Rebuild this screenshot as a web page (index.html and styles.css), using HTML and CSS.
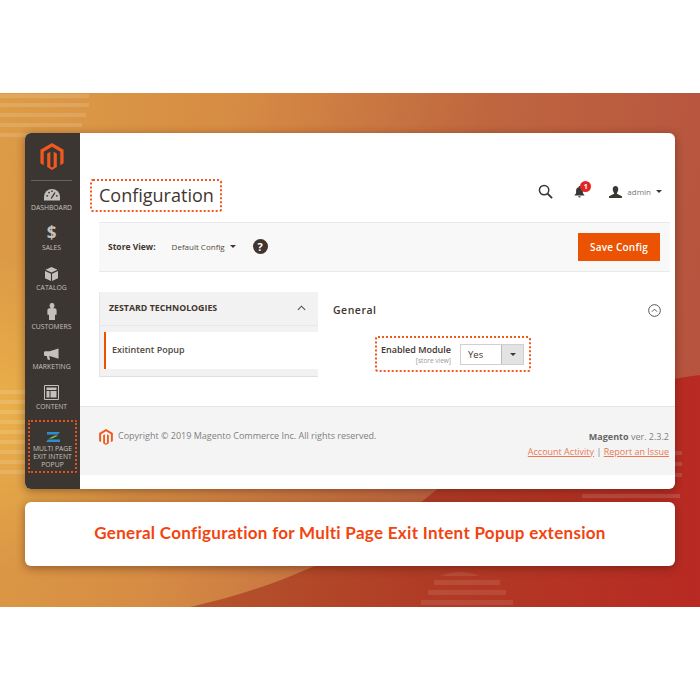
FILE: index.html
```html
<!DOCTYPE html>
<html lang="en">
<head>
    <meta charset="utf-8">
    <title>General Configuration</title>
    <link rel="stylesheet" href="styles.css">
</head>
<body>

    <div class="banner">
        <svg class="banner-art" viewBox="0 0 700 514" width="700" height="514">
            <defs>
                <linearGradient id="redfill" x1="0" y1="0" x2="1" y2="0">
                    <stop offset="0" stop-color="#b4552c"></stop>
                    <stop offset="0.45" stop-color="#b03c25"></stop>
                    <stop offset="1" stop-color="#b82a23"></stop>
                </linearGradient>
            </defs>
            <path d="M190 514C320 485 400 430 450 385C530 330 620 292 700 282V514Z" fill="url(#redfill)"></path>
            <g fill="#fff" opacity="0.13">
                <rect x="0" y="1" width="89" height="4"></rect>
                <rect x="0" y="10" width="89" height="4"></rect>
                <rect x="0" y="20" width="86" height="4"></rect>
                <rect x="0" y="30" width="82" height="4"></rect>
                <rect x="0" y="40" width="78" height="4"></rect>
                <rect x="0" y="297" width="25" height="4"></rect>
                <rect x="0" y="307" width="25" height="4"></rect>
                <rect x="0" y="317" width="25" height="4"></rect>
                <rect x="0" y="327" width="25" height="4"></rect>
                <rect x="0" y="337" width="25" height="4"></rect>
                <rect x="0" y="347" width="25" height="4"></rect>
                <rect x="0" y="357" width="25" height="4"></rect>
                <rect x="0" y="367" width="25" height="4"></rect>
                <rect x="0" y="377" width="25" height="4"></rect>
                <rect x="675" y="358" width="7" height="4"></rect>
                <rect x="675" y="369" width="7" height="4"></rect>
                <rect x="675" y="380" width="7" height="4"></rect>
                <rect x="582" y="401" width="98" height="4"></rect>
            </g>
            <g fill="#fff" opacity="0.09">
                <path d="M440 483q20-8 40 0z"></path>
                <rect x="434" y="487" width="66" height="5"></rect>
                <rect x="428" y="497" width="78" height="5"></rect>
                <rect x="421" y="507" width="92" height="5"></rect>
            </g>
        </svg>

        <div class="card">
            <nav class="sidebar">
                <div class="side-logo">
                    <svg viewBox="0 0 24 28" width="24" height="27"><path fill="#f1591f" d="M12 0L24 7v14l-3.400 2V9L12 4 3.400 9v14L0 21V7zM13.700 9v15.300L12 25.300l-1.700-1V9L7 11v14l5 3 5-3V11z"></path></svg>
                </div>
                <a class="side-item">
                    <svg viewBox="0 0 16 12" width="16" height="12"><path fill="#c4c1bc" d="M8 0a8 8 0 0 1 8 8v3.500H0V8a8 8 0 0 1 8-8z"></path><path stroke="#3b3632" stroke-width="1.400" d="M7.200 9.500L11 3.500M2.500 6.500l1.500.7M4.500 3l1 1.200M8 1.500V3M13.500 6.500l-1.500.7"></path></svg>
                    <span>DASHBOARD</span>
                </a>
                <a class="side-item">
                    <span class="side-dollar">$</span>
                    <span>SALES</span>
                </a>
                <a class="side-item">
                    <svg viewBox="0 0 14 15" width="13" height="14"><path fill="#c4c1bc" d="M7 0l6.500 3L7 6 .5 3zM0 4.200l6.400 3V15L0 12zM14 4.200l-6.400 3V15l6.400-3z"></path></svg>
                    <span>CATALOG</span>
                </a>
                <a class="side-item">
                    <svg viewBox="0 0 10 17" width="10" height="17"><path fill="#c4c1bc" d="M5 0a2.400 2.400 0 0 1 2.400 2.600C7.400 4 6.800 5 6 5.300h1.600C9 5.300 9.600 6.300 9.600 7.500v4.300H8V17H2v-5.200H.4V7.500C.4 6.300 1 5.300 2.400 5.300H4C3.200 5 2.600 4 2.600 2.600A2.400 2.400 0 0 1 5 0z"></path></svg>
                    <span>CUSTOMERS</span>
                </a>
                <a class="side-item">
                    <svg viewBox="0 0 16 12" width="15" height="12"><path fill="#c4c1bc" d="M15.500 0v11L6 8.200H5.500L6.500 12H4L3 8.200H1.500A1.500 1.500 0 0 1 0 6.700V4.500A1.500 1.500 0 0 1 1.500 3H6z"></path></svg>
                    <span>MARKETING</span>
                </a>
                <a class="side-item">
                    <svg viewBox="0 0 15 15" width="15" height="15"><path fill="none" stroke="#c4c1bc" stroke-width="1" d="M.5.5h14v14H.5z"></path><path fill="#c4c1bc" d="M2.500 2.500h10v2.500h-10zM2.500 6h3v6.500h-3zM6.500 6h6v6.500h-6z"></path></svg>
                    <span>CONTENT</span>
                </a>
                <a class="side-item side-ext">
                    <svg viewBox="0 0 14 10" width="14" height="10"><path fill="#2a8fd6" d="M1 0h13l-2 2.500H1z"></path><path fill="#8cc63f" d="M9 3.400h3.400L6 6.600H2.600z"></path><path fill="#2a8fd6" d="M2 7.500h12V10H0z"></path></svg>
                    <span>MULTI PAGE EXIT INTENT POPUP</span>
                </a>
            </nav>

            <div class="main">
                <div class="page-head">
                    <h1 class="page-title">Configuration</h1>
                    <div class="head-actions">
                        <svg viewBox="0 0 16 16" width="15" height="15"><circle cx="6.500" cy="6.500" r="5" fill="none" stroke="#3a3632" stroke-width="1.600"></circle><path stroke="#3a3632" stroke-width="2" d="M10.200 10.200L15 15"></path></svg>
                        <div class="bell">
                            <svg viewBox="0 0 12 14" width="11" height="12"><path fill="#3a3632" d="M6 0c.6 0 1 .4 1 1v.5c2 .5 3 2 3 4v3l2 2.500H0l2-2.500v-3c0-2 1-3.500 3-4V1c0-.6.4-1 1-1zM4.500 12h3a1.500 1.500 0 0 1-3 0z"></path></svg>
                            <span class="badge">1</span>
                        </div>
                        <div class="user">
                            <svg viewBox="0 0 14 13" width="13" height="12"><path fill="#3a3632" d="M7 0c2 0 3 1.500 3 3.500S9 7 8.500 7.500V8.500L14 11v2H0v-2l5.500-2.500V7.500C5 7 4 5.500 4 3.500S5 0 7 0z"></path></svg>
                            <span>admin</span>
                            <i class="caret"></i>
                        </div>
                    </div>
                </div>

                <div class="toolbar">
                    <b class="store-label">Store View:</b>
                    <span class="store-value">Default Config</span>
                    <i class="caret"></i>
                    <span class="help">?</span>
                    <button class="save-btn">Save Config</button>
                </div>

                <div class="config">
                    <div class="tabs">
                        <div class="tabs-head">
                            <span>ZESTARD TECHNOLOGIES</span>
                            <svg viewBox="0 0 10 6" width="9" height="6"><path fill="none" stroke="#514943" stroke-width="1.200" d="M1 5l4-4 4 4"></path></svg>
                        </div>
                        <div class="tabs-item">Exitintent Popup</div>
                    </div>
                    <div class="section">
                        <div class="section-head">
                            <span>General</span>
                            <svg viewBox="0 0 14 14" width="13" height="13"><circle cx="7" cy="7" r="6.300" fill="none" stroke="#514943"></circle><path fill="none" stroke="#514943" d="M4.300 8.300L7 5.600l2.700 2.700"></path></svg>
                        </div>
                        <div class="field">
                            <div class="field-label">
                                <b>Enabled Module</b>
                                <small>[store view]</small>
                            </div>
                            <div class="select">
                                <span>Yes</span>
                                <div class="select-btn"><i class="caret"></i></div>
                            </div>
                        </div>
                    </div>
                </div>

                <footer class="footer">
                    <div class="copy">
                        <svg viewBox="0 0 24 28" width="14" height="16"><path fill="#f1591f" d="M12 0L24 7v14l-3.400 2V9L12 4 3.400 9v14L0 21V7zM13.700 9v15.300L12 25.300l-1.700-1V9L7 11v14l5 3 5-3V11z"></path></svg>
                        <span>Copyright © 2019 Magento Commerce Inc. All rights reserved.</span>
                    </div>
                    <div class="legal">
                        <div><b>Magento</b> ver. 2.3.2</div>
                        <div class="legal-links"><a>Account Activity</a> | <a>Report an Issue</a></div>
                    </div>
                </footer>
            </div>
        </div>

        <div class="caption">General Configuration for Multi Page Exit Intent Popup extension</div>
    </div>

</body>
</html>
```

FILE: styles.css
```css
body {
    margin: 0;
    background: #fff;
    font-family: "Open Sans", "Liberation Sans", sans-serif;
    color: #41362f;
}

.banner {
    position: relative;
    box-sizing: border-box;
    height: 514px;
    margin-top: 93px;
    padding: 40px 25px 0;
    overflow: hidden;
    background:
        radial-gradient(circle at 0 62%, #eab04a 0, rgba(234, 176, 74, 0) 160px),
        linear-gradient(100deg, #dd9c46 0%, #d68c44 30%, #bf663f 62%, #b5503f 100%);
}

.banner-art {
    position: absolute;
    top: 0;
    left: 0;
}

.card {
    position: relative;
    display: flex;
    height: 356px;
    border-radius: 6px;
    overflow: hidden;
    background: #fff;
    box-shadow: 0 2px 10px rgba(60, 20, 10, 0.45);
}

.sidebar {
    flex: 0 0 55px;
    box-sizing: border-box;
    padding-right: 2px;
    background: #3b3632;
}

.side-logo {
    display: flex;
    justify-content: center;
    height: 37px;
    margin: 10px 6px 0;
    border-bottom: 1px solid #6a635d;
}

.side-item {
    display: flex;
    flex-direction: column;
    align-items: center;
    justify-content: flex-end;
    box-sizing: border-box;
    height: 39.7px;
    padding-bottom: 8.500px;
    color: #c4c1bc;
    font-size: 6.800px;
    line-height: 8px;
    text-align: center;
}

.side-item svg {
    margin-bottom: 3px;
}

.side-dollar {
    font-size: 17px;
    font-weight: 700;
    line-height: 18px;
    margin-bottom: 2px;
}

.side-ext {
    justify-content: center;
    height: 53px;
    margin: 1px 1px 0 3px;
    padding-top: 7px;
    padding-bottom: 0;
    border: 2px dotted #e8501c;
    border-radius: 2px;
}

.main {
    flex: 1;
    display: flex;
    flex-direction: column;
    min-width: 0;
}

.page-head {
    display: flex;
    align-items: center;
    justify-content: space-between;
    margin: 46px 13px 0 10px;
}

.page-title {
    box-sizing: border-box;
    height: 33px;
    margin: 0;
    padding: 0 6px 0 7px;
    border: 2px dotted #f1591f;
    border-radius: 3px;
    font-size: 18px;
    font-weight: 400;
    line-height: 28px;
}

.head-actions {
    display: flex;
    align-items: center;
    margin-bottom: 8px;
    font-size: 8px;
    color: #777;
}

.bell {
    position: relative;
    display: flex;
    margin-left: 21px;
}

.badge {
    position: absolute;
    top: -5px;
    left: 6px;
    width: 11px;
    height: 11px;
    border-radius: 50%;
    background: #e22626;
    color: #fff;
    font-size: 7px;
    font-weight: 700;
    line-height: 11px;
    text-align: center;
}

.user {
    display: flex;
    align-items: center;
    gap: 5px;
    margin-left: 24px;
}

.caret {
    display: inline-block;
    width: 0;
    height: 0;
    border-left: 3px solid transparent;
    border-right: 3px solid transparent;
    border-top: 3.500px solid #41362f;
}

.toolbar {
    display: flex;
    align-items: center;
    box-sizing: border-box;
    height: 50px;
    margin: 10px 5px 0 19px;
    padding: 0 10px 1px 9px;
    background: #f8f8f8;
    border-top: 1px solid #e9e9e9;
    border-bottom: 1px solid #e9e9e9;
    font-size: 8.500px;
}

.store-label {
    font-weight: 700;
    margin-right: 16px;
}

.store-value {
    margin-right: 5px;
    font-size: 8px;
    color: #514943;
}

.help {
    width: 15px;
    height: 15px;
    margin-left: 17px;
    border-radius: 50%;
    background: #41362f;
    color: #fff;
    font-size: 11px;
    font-weight: 700;
    line-height: 15px;
    text-align: center;
}

.save-btn {
    width: 82px;
    height: 28px;
    margin-left: auto;
    padding: 0;
    border: 0;
    background: #eb5202;
    color: #fff;
    font-family: inherit;
    font-size: 10px;
    font-weight: 600;
    letter-spacing: 0.2px;
}

.config {
    display: flex;
    flex: 1;
    margin: 20px 5px 0 19px;
}

.tabs {
    flex: 0 0 219px;
    box-sizing: border-box;
    height: 85px;
    padding-bottom: 8px;
    background: #f2f2f2;
    border-left: 1px solid #e6e6e6;
    border-bottom: 1px solid #e0e0e0;
}

.tabs-head {
    display: flex;
    align-items: center;
    justify-content: space-between;
    box-sizing: border-box;
    height: 34px;
    padding: 0 12px 2px 9px;
    margin-bottom: 6px;
    border-bottom: 1px solid #e8e8e8;
    font-size: 8.800px;
    font-weight: 700;
}

.tabs-item {
    box-sizing: border-box;
    height: 37px;
    margin-left: 4px;
    padding-left: 6px;
    background: #fff;
    border-left: 2px solid #eb5202;
    font-size: 9px;
    font-weight: 600;
    line-height: 35px;
    color: #514943;
}

.section {
    flex: 1;
    padding-left: 15px;
}

.section-head {
    display: flex;
    align-items: center;
    justify-content: space-between;
    margin-top: 11px;
    padding-right: 9px;
    font-size: 10.500px;
    font-weight: 600;
    letter-spacing: 0.5px;
}

.field {
    display: flex;
    align-items: center;
    box-sizing: border-box;
    width: 156px;
    height: 36px;
    margin: 19px 0 0 42px;
    padding-right: 5px;
    border: 2px dotted #f1591f;
    border-radius: 3px;
}

.field-label {
    flex: 1;
    font-size: 9px;
    text-align: right;
    font-weight: 600;
}

.field-label b {
    display: block;
    font-weight: 600;
    line-height: 12px;
}

.field-label small {
    display: block;
    font-size: 6.500px;
    font-weight: 400;
    line-height: 9px;
    color: #999;
}

.select {
    display: flex;
    box-sizing: border-box;
    width: 64px;
    height: 21px;
    margin-left: 9px;
    border: 1px solid #d0d0d0;
    font-size: 9.500px;
    line-height: 19px;
}

.select span {
    flex: 1;
    padding-left: 7px;
}

.select-btn {
    display: flex;
    align-items: center;
    justify-content: center;
    width: 21px;
    background: #e3e3e3;
    border-left: 1px solid #bbb;
}

.footer {
    display: flex;
    justify-content: space-between;
    box-sizing: border-box;
    height: 69px;
    margin-bottom: 14px;
    padding: 22px 6px 0 19px;
    background: #f4f4f4;
    border-top: 1px solid #e4e4e4;
    font-size: 9px;
    color: #808080;
}

.copy {
    display: flex;
    align-items: flex-start;
    gap: 5px;
}

.copy span {
    line-height: 14px;
}

.legal {
    text-align: right;
    line-height: 15px;
}

.legal b {
    color: #666;
}

.legal-links a {
    color: #ea7a54;
    text-decoration: underline;
}

.caption {
    position: relative;
    height: 64px;
    margin-top: 13px;
    border-radius: 6px;
    background: #fff;
    box-shadow: 0 2px 10px rgba(60, 20, 10, 0.45);
    color: #f1440f;
    font-family: Lato, "Open Sans", sans-serif;
    font-size: 17px;
    font-weight: 700;
    letter-spacing: 0.3px;
    line-height: 62px;
    text-align: center;
}
```
